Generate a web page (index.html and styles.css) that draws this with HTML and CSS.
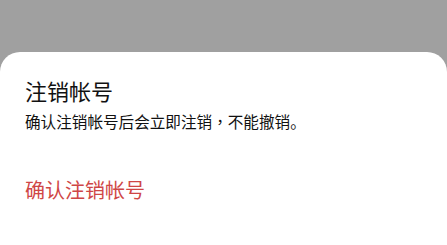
FILE: index.html
```html
<!DOCTYPE html>
<html lang="zh-CN">
<head>
    <meta charset="UTF-8">
    <meta name="viewport" content="width=device-width, initial-scale=1.0">
    <title>注销帐号</title>
    <link rel="stylesheet" href="styles.css">
</head>
<body>
	<div class="sheet">
		<h1 class="title">注销帐号</h1>
		<p class="desc">确认注销帐号后会立即注销<span class="punct" lang="zh-TW">，</span>不能撤销。</p>
		<div class="action">确认注销帐号</div>
	</div>
</body>
</html>
```

FILE: styles.css
```css
body,html{
	margin: 0;
	padding: 0;
	height: 100%;
	background: #a0a0a0;
	font-family: "Noto Sans CJK SC", "Noto Sans", sans-serif;
}
body{
	display: flex;
	flex-direction: column;
	padding-top: 52px;
	box-sizing: border-box;
}
.sheet{
	flex: 1;
	background: #fff;
	border-radius: 20px 20px 0 0;
	padding: 0 25px;
}
.title{
	margin: 24px 0 0;
	font-size: 22px;
	font-weight: 400;
	line-height: 29px;
	color: #111;
}
.desc{
	margin: 5px 0 0;
	font-size: 15.6px;
	line-height: 22px;
	color: #111;
}
.punct{
	font-family: "Noto Sans CJK TC", sans-serif;
}
.action{
	margin-top: 45px;
	font-size: 20px;
	line-height: 26px;
	color: #cf4646;
}
```
